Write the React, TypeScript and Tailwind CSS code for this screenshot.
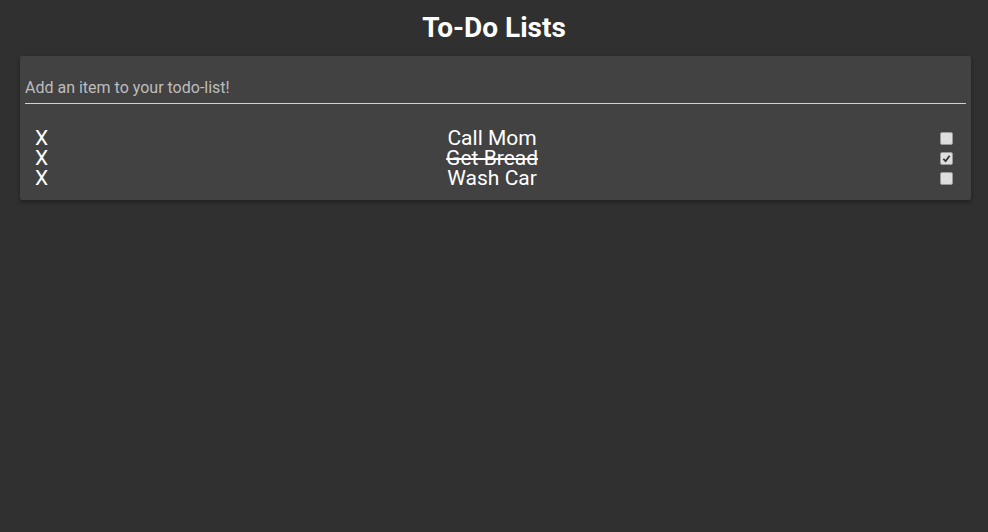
import { useState } from "react";

type Todo = {
    id: number,
    text: string,
    done: boolean
}

const startList: Todo[] = [
    { id: 1, text: "Call Mom", done: false },
    { id: 2, text: "Get Bread", done: true },
    { id: 3, text: "Wash Car", done: false },
]

const App = () => {
    const [todos, setTodos] = useState<Todo[]>(startList)
    const [item, setItem] = useState<string>('')

    const toggle = (id: number) => {
        setTodos(todos.map((t) => t.id === id ? { ...t, done: !t.done } : t))
    }
    const remove = (id: number) => {
        setTodos(todos.filter((t) => t.id !== id))
    }
    const add = (e: React.FormEvent) => {
        e.preventDefault()
        if (!item.trim()) return
        setTodos([...todos, { id: Date.now(), text: item, done: false }])
        setItem('')
    }

    return <div className="min-h-screen w-full bg-[#303030] text-white font-['Roboto',sans-serif]">
        <div className="h-[56px] flex items-center justify-center">
            <h1 className="text-[28px] font-bold leading-none">To-Do Lists</h1>
        </div>
        <div className="mx-[20px] w-[951px] bg-[#424242] rounded-[2px] shadow-[0_2px_4px_rgba(0,0,0,0.35)] px-[5px] pt-[22px] pb-[12px]">
            <form onSubmit={add}>
                <input
                    className="block w-full h-[26px] pb-[6px] bg-transparent border-b border-[#d0d0d0] text-base text-white placeholder:text-[#bdbdbd] outline-none"
                    type="text"
                    placeholder="Add an item to your todo-list!"
                    value={item}
                    onChange={(e) => { setItem(e.target.value) }}
                />
            </form>
            <div className="mt-[24px] flex flex-col">
                {todos.map((t) => (
                    <div key={t.id} className="h-[20px] flex items-center pl-[10px] pr-[10px] text-[21px] leading-[20px]">
                        <div className="cursor-pointer" onClick={() => remove(t.id)}>X</div>
                        <div className={"flex-1 text-center " + (t.done ? "line-through" : "")}>{t.text}</div>
                        <div
                            className="ml-[4px] mr-[3px] w-[13px] h-[13px] bg-[#dedede] border border-[#9a9a9a] rounded-[2px] flex items-center justify-center cursor-pointer"
                            onClick={() => toggle(t.id)}
                        >
                            {t.done && <svg width="9" height="9" viewBox="0 0 10 10">
                                <path d="M1.5 5.5 L4 8 L8.5 2" stroke="#333" strokeWidth="2" fill="none" />
                            </svg>}
                        </div>
                    </div>
                ))}
            </div>
        </div>
    </div>
}

export default App;
